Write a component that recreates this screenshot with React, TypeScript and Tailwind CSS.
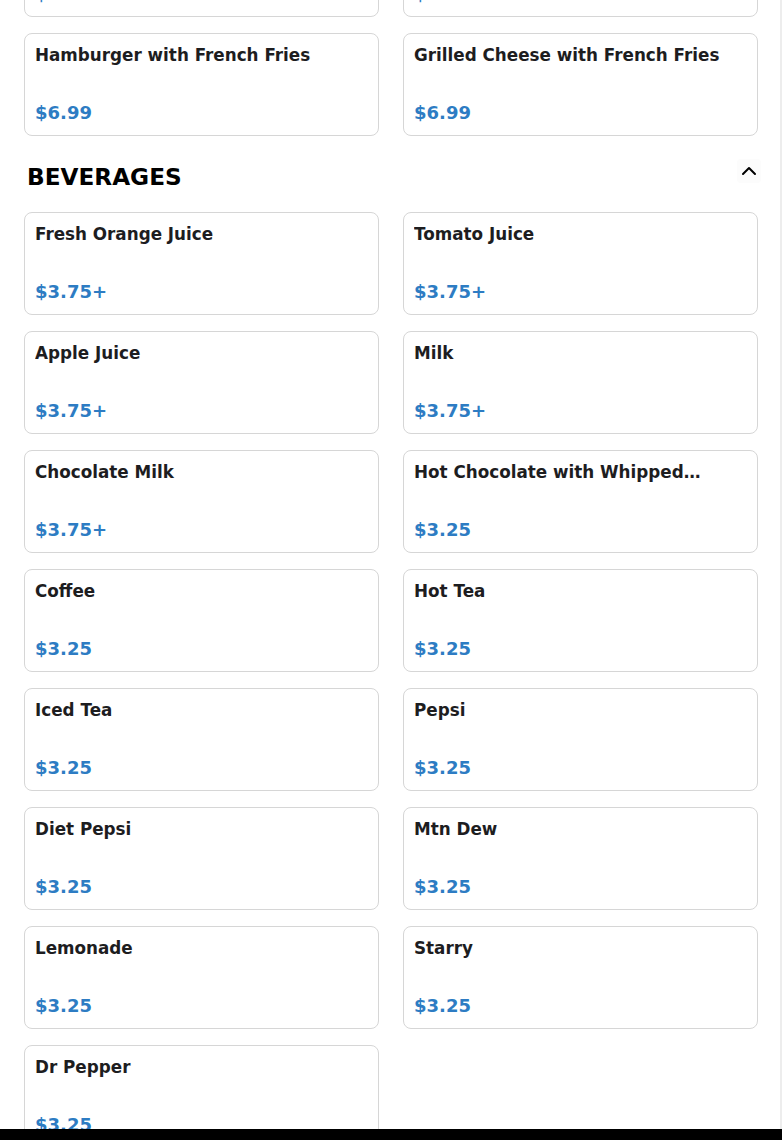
import { ChevronUp } from "lucide-react";

type Item = { name: string; price: string };

const lunch: Item[] = [
    { name: "Chicken Tenders with French Fries", price: "$6.99" },
    { name: "Fish Sandwich with French Fries", price: "$6.99" },
    { name: "Hamburger with French Fries", price: "$6.99" },
    { name: "Grilled Cheese with French Fries", price: "$6.99" },
];

const beverages: Item[] = [
    { name: "Fresh Orange Juice", price: "$3.75+" },
    { name: "Tomato Juice", price: "$3.75+" },
    { name: "Apple Juice", price: "$3.75+" },
    { name: "Milk", price: "$3.75+" },
    { name: "Chocolate Milk", price: "$3.75+" },
    { name: "Hot Chocolate with Whipped…", price: "$3.25" },
    { name: "Coffee", price: "$3.25" },
    { name: "Hot Tea", price: "$3.25" },
    { name: "Iced Tea", price: "$3.25" },
    { name: "Pepsi", price: "$3.25" },
    { name: "Diet Pepsi", price: "$3.25" },
    { name: "Mtn Dew", price: "$3.25" },
    { name: "Lemonade", price: "$3.25" },
    { name: "Starry", price: "$3.25" },
    { name: "Dr Pepper", price: "$3.25" },
];

function MenuCard({ item }: { item: Item }) {
    return (
        <div className="flex h-[103px] flex-col rounded-lg border border-[#d6d6d6] bg-white pt-[9px] pr-[9px] pb-[8px] pl-[10px]">
            <h4 className="truncate text-[16.8px] leading-6 font-bold text-[#1d1d1f]">{item.name}</h4>
            <span className="mt-auto text-[18px] leading-7 font-bold text-[#2d7cc3]">{item.price}</span>
        </div>
    );
}

function CardGrid({ items }: { items: Item[] }) {
    return (
        <div className="grid grid-cols-[355px_355px] gap-x-6 gap-y-4">
            {items.map((item) => (
                <MenuCard key={item.name} item={item} />
            ))}
        </div>
    );
}

export default function App() {
    return (
        <div className="relative h-screen overflow-hidden bg-white font-['DejaVu_Sans',sans-serif]">
            <div className="-mt-[86px] px-6">
                <CardGrid items={lunch} />

                <section>
                    <div className="mt-[23px] mb-[19px] flex items-start justify-between">
                        <h2 className="mt-[2px] pl-[3px] text-[23.2px] leading-8 font-bold text-black">BEVERAGES</h2>
                        <button className="-mr-[3px] flex h-6 w-6 items-center justify-center rounded bg-[#fcfcfc] text-black">
                            <ChevronUp size={24} strokeWidth={2} />
                        </button>
                    </div>
                    <CardGrid items={beverages} />
                </section>
            </div>

            {/* scrollbar edge */}
            <div className="absolute top-0 right-0 bottom-0 w-[2px] bg-[#ededed]" />
            {/* bottom bar */}
            <div className="absolute right-0 bottom-0 left-0 h-[11px] bg-black" />
        </div>
    );
}
